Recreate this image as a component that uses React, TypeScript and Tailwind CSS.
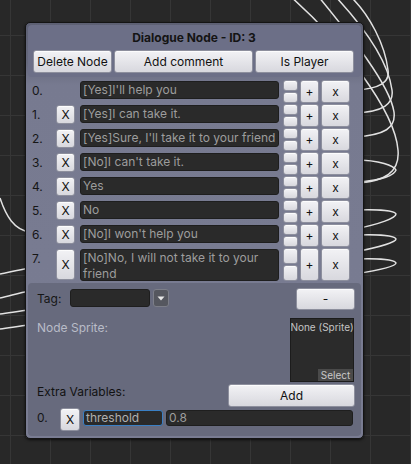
import clsx from 'clsx';
import React from 'react';

interface BtnProps {
  children?: React.ReactNode;
  className?: string;
}

const Btn: React.FC<BtnProps> = ({ children, className = '' }) => (
  <div
    className={clsx(
      'flex items-center justify-center rounded-[3px] border border-[#8d8f9d] bg-[linear-gradient(to_bottom,#f2f2f5,#d8d8de)] text-[12px] leading-none text-[#111] shadow-[inset_0_1px_0_rgba(255,255,255,0.8)]',
      className
    )}
  >
    {children}
  </div>
);

interface FieldProps {
  text?: string;
  className?: string;
}

const Field: React.FC<FieldProps> = ({ text, className = '' }) => (
  <div
    className={clsx(
      'overflow-hidden rounded-[3px] border border-[#1e1e1e] bg-[#2a2a2a] pl-[2px] text-[12px] text-[#9d9d9d]',
      className
    )}
  >
    {text}
  </div>
);

const options = [
  "[Yes]I'll help you",
  '[Yes]I can take it.',
  "[Yes]Sure, I'll take it to your friend",
  "[No]I can't take it.",
  'Yes',
  'No',
  "[No]I won't help you",
  '[No]No, I will not take it to your friend',
];

// connection curves between nodes
const curves = [
  'M355,183 C385,182 400,172 398,150 C395,110 340,40 290,-4',
  'M355,160 C380,160 394,166 396,170 C394,176 380,180 360,182',
  'M355,137 C385,135 396,128 394,112 C390,85 350,35 318,-4',
  'M355,113 C383,112 394,104 392,90 C388,60 362,25 335,-4',
  'M355,90 C380,89 390,82 388,70 C385,45 370,15 350,-4',
  'M355,210 C380,209 395,211 396,214 C396,218 380,224 355,229',
  'M355,235 C380,234 395,236 396,239 C396,242 380,247 355,252',
  'M355,259 C380,258 395,260 396,263 C396,266 380,270 355,274',
  'M0,198 C6,216 14,230 30,232',
  'M0,274 C10,272 18,270 30,268',
  'M0,298 C10,296 18,293 30,291',
  'M0,314 C10,313 18,311 30,310',
  'M0,329 C10,328 18,326 30,325',
];

export default function App() {
  return (
    <div className="relative h-[464px] w-[411px] overflow-hidden bg-[#282828] bg-[linear-gradient(to_right,#363636_1px,transparent_1px),linear-gradient(to_bottom,#363636_1px,transparent_1px)] bg-size-[40px_40px] bg-position-[10px_35px] font-['Inter',sans-serif]">
      <svg className="absolute inset-0" width="411" height="464" viewBox="0 0 411 464" fill="none">
        {curves.map((d) => (
          <path key={d} d={d} stroke="#e2e2e2" strokeWidth="1.5" />
        ))}
      </svg>

      {/* Node window */}
      <div className="absolute left-[25px] top-[22px] w-[339px] rounded-[5px] border border-[#141414] bg-[linear-gradient(to_bottom,#5d6073_0px,#65687c_40px,#777a90_62px,#797c92_100%)] pb-[2px] shadow-[0_1px_3px_rgba(0,0,0,0.7)]">
        {/* Header */}
        <div className="mx-[2px] mt-[2px] flex h-[52px] flex-col rounded-[4px] bg-[#6c6f87] pl-[5px] pr-[6px] pt-[5px]">
          <div className="text-center text-[12px] font-bold leading-[16px] text-[#141414]">
            Dialogue Node - ID: 3
          </div>
          <div className="mt-[4px] flex h-[23px] gap-[2px]">
            <Btn className="w-[79px]">Delete Node</Btn>
            <Btn className="w-[139px]">Add comment</Btn>
            <Btn className="w-[99px]">Is Player</Btn>
          </div>
        </div>

        {/* Options */}
        <div className="mt-[3px] flex flex-col gap-[1px] pl-[6px]">
          {options.map((text, i) => {
            const tall = i === options.length - 1;
            return (
              <div key={i} className={clsx('flex', tall ? 'h-[33px]' : 'h-[23px]')}>
                <div className="w-[24px] pt-[3px] text-[12px] leading-[16px] text-[#161616]">{i}.</div>
                {i === 0 ? (
                  <div className="w-[19px]" />
                ) : (
                  <Btn className={clsx('mt-[1px] w-[19px]', tall ? 'h-[31px]' : 'h-[19px]')}>X</Btn>
                )}
                <Field
                  text={text}
                  className={clsx('ml-[5px] mt-[1px] w-[199px] leading-[16px]', tall ? 'h-[32px]' : 'h-[18px] whitespace-nowrap')}
                />
                <div className="ml-[4px] flex w-[15px] flex-col gap-[1px]">
                  <Btn className="flex-1" />
                  <Btn className="flex-1" />
                </div>
                <Btn className="ml-[2px] w-[19px]">+</Btn>
                <Btn className="ml-[2px] w-[29px]">x</Btn>
              </div>
            );
          })}
        </div>

        {/* Lower section */}
        <div className="mx-[2px] mt-[2px] flex flex-col rounded-[4px] bg-[#676a7d] pb-[5px] pl-[9px] pt-[5px]">
          <div className="flex h-[22px] items-start">
            <div className="w-[33px] pt-[3px] text-[12px] leading-[16px] text-[#161616]">Tag:</div>
            <Field className="mt-[1px] h-[18px] w-[80px]" />
            <div className="ml-[3px] mt-[1px] flex h-[18px] w-[16px] items-center justify-center rounded-[3px] border border-[#7c7e88] bg-[#55575f]">
              <svg width="8" height="5" viewBox="0 0 8 5">
                <path d="M0.5 0.5 H7.5 L4 4.5 Z" fill="#e8e8e8" />
              </svg>
            </div>
            <div className="flex-1" />
            <Btn className="mr-[6px] h-[22px] w-[59px]">-</Btn>
          </div>

          <div className="mt-[8px] flex h-[64px] items-start">
            <div className="pt-[2px] text-[12px] leading-[16px] text-[#b9bcc8]">Node Sprite:</div>
            <div className="flex-1" />
            <div className="mr-[7px] flex h-[64px] w-[64px] flex-col justify-between overflow-hidden border border-[#1c1c1c] bg-[#2b2b2b]">
              <div className="flex justify-center whitespace-nowrap text-[10px] leading-[16px] text-[#c4c4c4]">
                None (Sprite)
              </div>
              <div className="flex justify-end">
                <div className="h-[12px] w-[35px] bg-[#4a4a4a] text-center text-[10px] leading-[12px] text-[#c8c8c8]">Select</div>
              </div>
            </div>
          </div>

          <div className="mt-[2px] flex h-[23px] items-start">
            <div className="text-[12px] leading-[16px] text-[#121212]">Extra Variables:</div>
            <div className="flex-1" />
            <Btn className="mr-[6px] h-[23px] w-[127px]">Add</Btn>
          </div>

          <div className="mt-[1px] flex h-[23px] items-start">
            <div className="w-[23px] pt-[2px] text-[12px] leading-[16px] text-[#161616]">0.</div>
            <Btn className="h-[23px] w-[20px]">X</Btn>
            <Field
              text="threshold"
              className="ml-[3px] mt-[2px] h-[16px] w-[80px] border-[#3a7fc4] leading-[14px] text-[#b0b0b0]"
            />
            <Field text="0.8" className="ml-[3px] mt-[2px] h-[16px] w-[187px] leading-[14px]" />
          </div>
        </div>
      </div>
    </div>
  );
}
